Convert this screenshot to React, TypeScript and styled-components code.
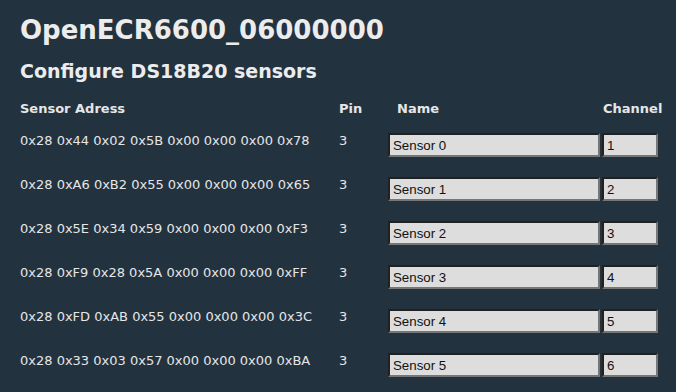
import { FC } from 'react';
import styled, { createGlobalStyle } from 'styled-components';

const GlobalStyle = createGlobalStyle`
  html, body {
    margin: 0;
    padding: 0;
    background: #22323f;
  }
  body {
    font-family: "DejaVu Sans", sans-serif;
    color: #e6e6e6;
  }
`;

const sensors = [
  { address: '0x28 0x44 0x02 0x5B 0x00 0x00 0x00 0x78', pin: 3, name: 'Sensor 0', channel: 1 },
  { address: '0x28 0xA6 0xB2 0x55 0x00 0x00 0x00 0x65', pin: 3, name: 'Sensor 1', channel: 2 },
  { address: '0x28 0x5E 0x34 0x59 0x00 0x00 0x00 0xF3', pin: 3, name: 'Sensor 2', channel: 3 },
  { address: '0x28 0xF9 0x28 0x5A 0x00 0x00 0x00 0xFF', pin: 3, name: 'Sensor 3', channel: 4 },
  { address: '0x28 0xFD 0xAB 0x55 0x00 0x00 0x00 0x3C', pin: 3, name: 'Sensor 4', channel: 5 },
  { address: '0x28 0x33 0x03 0x57 0x00 0x00 0x00 0xBA', pin: 3, name: 'Sensor 5', channel: 6 },
];

const Page = styled.div`
  width: 676px;
  height: 392px;
  padding: 14px 20px 0;
  box-sizing: border-box;
  overflow: hidden;
`;

const Title = styled.h1`
  margin: 0;
  font-size: 26px;
  font-weight: bold;
  line-height: 32px;
  color: #ececec;
`;

const SubTitle = styled.h2`
  margin: 14px 0 0;
  font-size: 19px;
  font-weight: bold;
  line-height: 22px;
  color: #ececec;
`;

const Table = styled.div`
  margin-top: 19px;
  display: grid;
  grid-template-columns: 319px 49px 214px 60px;
  grid-template-rows: 32px repeat(6, 44px);
  align-items: start;
`;

const Row = styled.div`
  display: contents;
`;

const Th = styled.div<{ $indent?: number }>`
  font-size: 13px;
  font-weight: bold;
  line-height: 16px;
  padding-left: ${(p) => p.$indent ?? 0}px;
`;

const Td = styled.div`
  font-size: 13px;
  line-height: 16px;
`;

const Field = styled.input<{ $w: number }>`
  display: block;
  width: ${(p) => p.$w}px;
  height: 24px;
  box-sizing: border-box;
  margin: 0;
  padding: 1px 3px 0;
  background: #dddddd;
  border: 2px inset #767676;
  font-family: "Liberation Sans", Arial, sans-serif;
  font-size: 13.3px;
  color: #111;
  outline: none;
`;

const App: FC = () => (
  <Page>
    <GlobalStyle />
    <Title>OpenECR6600_06000000</Title>
    <SubTitle>Configure DS18B20 sensors</SubTitle>
    <Table>
      <Row>
        <Th>Sensor Adress</Th>
        <Th>Pin</Th>
        <Th $indent={9}>Name</Th>
        <Th $indent={1}>Channel</Th>
      </Row>
      {sensors.map((s) => (
        <Row key={s.address}>
          <Td>{s.address}</Td>
          <Td>{s.pin}</Td>
          <div>
            <Field $w={212} defaultValue={s.name} />
          </div>
          <div>
            <Field $w={56} defaultValue={String(s.channel)} />
          </div>
        </Row>
      ))}
    </Table>
  </Page>
);

export default App;
